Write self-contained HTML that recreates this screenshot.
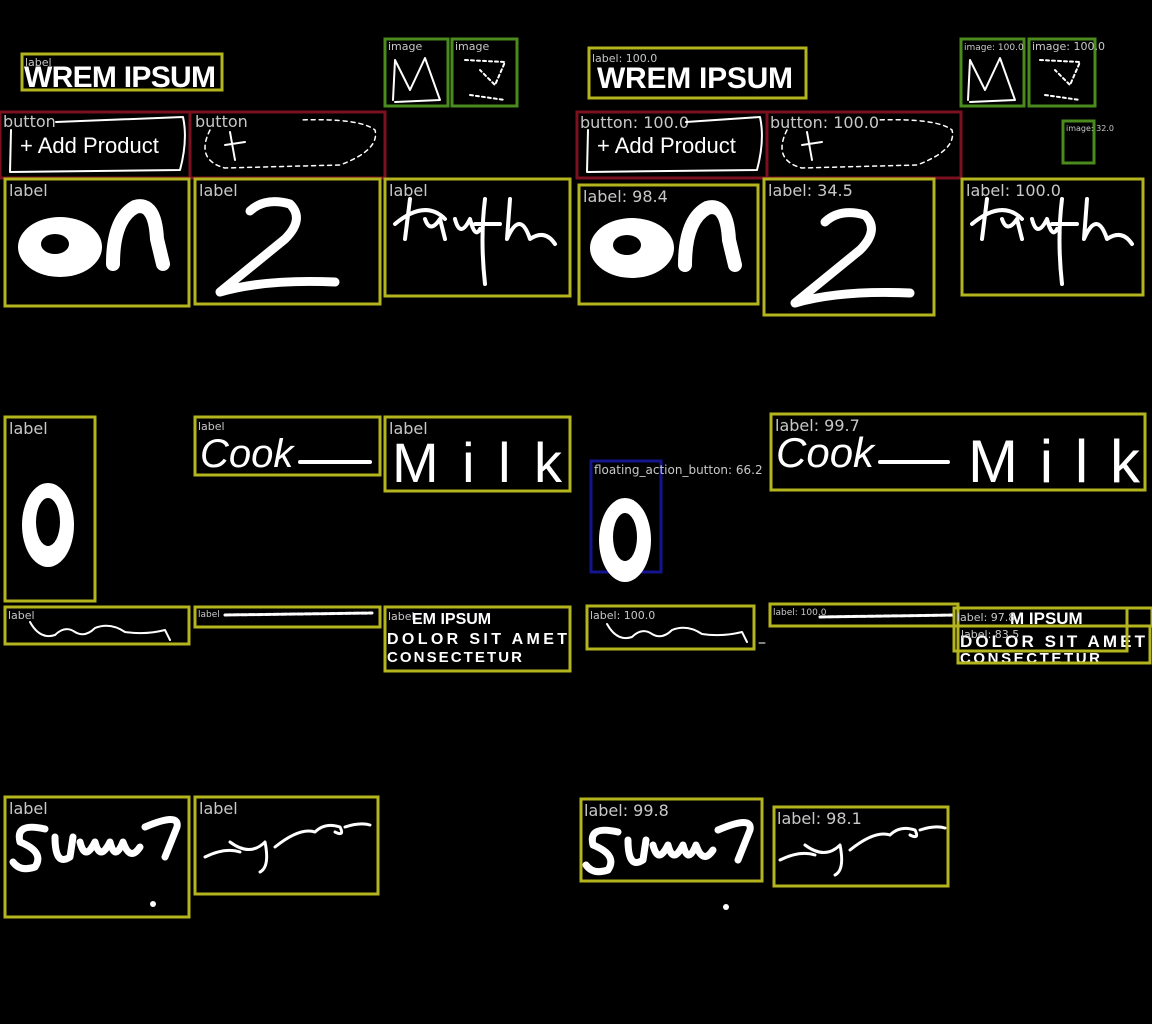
<!DOCTYPE html>
<html><head><meta charset="utf-8"><style>
html,body{margin:0;padding:0;background:#000;width:1152px;height:1024px;overflow:hidden}
svg{display:block}
.y{fill:none;stroke:#b4b41e;stroke-width:3}
.r{fill:none;stroke:#7a1020;stroke-width:3}
.g{fill:none;stroke:#4a8a1e;stroke-width:3}
.b{fill:none;stroke:#14148c;stroke-width:3}
.l{fill:#c8c8c8;font-family:"DejaVu Sans","Liberation Sans",sans-serif}
.s{font-size:11px}.m{font-size:16px}.t{font-size:9px}
.w{fill:none;stroke:#fff;stroke-linecap:round;stroke-linejoin:round}
.hw{fill:#fff;font-family:"Liberation Sans",sans-serif;font-weight:bold}
.hn{fill:#fff;font-family:"Liberation Sans",sans-serif}
</style></head><body>
<svg width="1152" height="1024" viewBox="0 0 1152 1024">
<defs>
<g id="on"><ellipse cx="55" cy="68" rx="42" ry="30" fill="#fff"/><ellipse cx="50" cy="65" rx="14" ry="10" fill="#000"/><path class="w" stroke-width="14" d="M108 85 Q108 40 130 28 Q150 22 152 60 L158 85"/></g>
<g id="two"><path class="w" stroke-width="9" d="M55 32 Q70 18 95 25 Q110 40 90 60 L25 113 Q70 100 140 103"/></g>
<g id="zero"><ellipse cx="35" cy="65" rx="26" ry="42" fill="#fff"/><ellipse cx="35" cy="62" rx="12" ry="24" fill="#000"/></g>
<g id="thk"><path class="w" stroke-width="4" d="M10 45 Q40 20 60 40 M25 20 L20 60 M40 40 Q45 55 55 40 L60 60 M70 40 Q75 60 85 40 Q90 60 95 50 M100 20 Q95 60 100 105 M90 45 L115 45 M125 20 L122 60 Q135 30 145 60 Q160 50 170 65"/></g>
<g id="sum"><path class="w" stroke-width="7" d="M40 32 Q10 25 15 45 Q40 55 30 70 Q15 75 8 65 M50 40 Q50 70 65 60 L68 40 M75 45 Q80 65 90 45 Q95 65 105 45 Q110 65 118 45 Q125 65 135 50 M140 30 Q175 15 172 30 L160 60"/><circle cx="148" cy="107" r="3" fill="#fff"/></g>
<g id="sig"><path class="w" stroke-width="3" d="M10 60 Q30 50 45 55 M35 45 Q55 60 70 45 Q75 70 65 75 M80 50 Q105 30 120 35 M120 35 Q130 25 145 30 Q150 40 140 35 M150 30 Q165 25 175 28"/></g>
<g id="wav"><path class="w" stroke-width="2" d="M20 12 Q30 30 45 25 Q55 15 65 22 Q75 28 85 18 Q100 12 115 22 Q135 25 155 20 L160 30"/></g>
</defs>

<!-- LEFT -->
<rect class="y" x="22" y="54" width="200" height="36"/>
<text class="hw" x="24" y="87" font-size="30" textLength="192">WREM IPSUM</text>
<text class="l s" x="25" y="66">label</text>

<rect class="g" x="385" y="39" width="63" height="67"/>
<text class="l s" x="388" y="50">image</text>
<path class="w" stroke-width="2" d="M393 100 L395 60 L410 90 L425 58 L440 100 L395 102"/>
<rect class="g" x="452" y="39" width="65" height="67"/>
<text class="l s" x="455" y="50">image</text>
<path class="w" stroke-width="2" stroke-dasharray="3 3" d="M465 60 L505 62 L495 85 L480 70 M470 95 L505 100"/>

<rect class="r" x="0" y="112" width="190" height="66"/>
<text class="l m" x="3" y="127">button</text>
<path class="w" stroke-width="2" d="M56 122 L183 117 Q188 140 180 170 L10 172 L11 130"/>
<text class="hn" x="20" y="153" font-size="22">+ Add Product</text>
<rect class="r" x="190" y="112" width="195" height="66"/>
<text class="l m" x="195" y="127">button</text>
<path class="w" stroke-width="1.5" stroke-dasharray="4 4" d="M210 130 Q195 160 225 168 L340 165 Q380 150 375 130 Q360 118 300 120"/>
<path class="w" stroke-width="2" d="M230 132 L235 160 M225 145 L245 142"/>

<rect class="y" x="5" y="179" width="184" height="127"/>
<text class="l m" x="9" y="196">label</text>
<use href="#on" x="5" y="179"/>
<rect class="y" x="195" y="179" width="185" height="125"/>
<text class="l m" x="199" y="196">label</text>
<use href="#two" x="195" y="179"/>
<rect class="y" x="385" y="179" width="185" height="117"/>
<text class="l m" x="389" y="196">label</text>
<use href="#thk" x="385" y="179"/>

<rect class="y" x="5" y="417" width="90" height="184"/>
<text class="l m" x="9" y="434">label</text>
<use href="#zero" x="13" y="460"/>
<rect class="y" x="195" y="417" width="185" height="58"/>
<text class="l s" x="198" y="430">label</text>
<text class="hn" x="200" y="467" font-size="40" font-style="italic">Cook</text>
<path class="w" stroke-width="4" d="M300 462 L370 462"/>
<rect class="y" x="385" y="417" width="185" height="74"/>
<text class="l m" x="389" y="434">label</text>
<text class="hn" x="392" y="482" font-size="56" textLength="170">Milk</text>

<rect class="y" x="5" y="607" width="184" height="37"/>
<text class="l s" x="8" y="619">label</text>
<use href="#wav" x="10" y="610"/>
<rect class="y" x="195" y="607" width="185" height="20"/>
<text class="t l" x="198" y="617">label</text>
<path class="w" stroke-width="3" stroke-dasharray="6 2" d="M225 615 L372 613"/>
<rect class="y" x="385" y="607" width="185" height="64"/>
<text class="l s" x="388" y="620">label</text>
<text class="hw" x="412" y="624" font-size="16">EM IPSUM</text>
<text class="hw" x="387" y="644" font-size="16" textLength="180">DOLOR SIT AMET</text>
<text class="hw" x="387" y="662" font-size="15" textLength="135">CONSECTETUR</text>

<rect class="y" x="5" y="797" width="184" height="120"/>
<text class="l m" x="9" y="814">label</text>
<use href="#sum" x="5" y="797"/>
<rect class="y" x="195" y="797" width="183" height="97"/>
<text class="l m" x="199" y="814">label</text>
<use href="#sig" x="195" y="797"/>

<!-- RIGHT -->
<rect class="y" x="589" y="48" width="217" height="50"/>
<text class="hw" x="597" y="88" font-size="30" textLength="196">WREM IPSUM</text>
<text class="l s" x="592" y="62">label: 100.0</text>

<rect class="g" x="961" y="39" width="63" height="67"/>
<text class="l t" x="964" y="50">image: 100.0</text>
<path class="w" stroke-width="2" d="M968 100 L970 60 L985 90 L1000 58 L1015 100 L970 102"/>
<rect class="g" x="1029" y="39" width="66" height="67"/>
<text class="l s" x="1032" y="50">image: 100.0</text>
<path class="w" stroke-width="2" stroke-dasharray="3 3" d="M1040 60 L1080 62 L1070 85 L1055 70 M1045 95 L1080 100"/>
<rect class="g" x="1063" y="121" width="31" height="42"/>
<text class="l" font-size="8" x="1066" y="131">image: 32.0</text>

<rect class="r" x="577" y="112" width="190" height="66"/>
<text class="l m" x="580" y="128">button: 100.0</text>
<path class="w" stroke-width="2" d="M686 122 L760 117 Q765 140 757 170 L587 172 L588 130"/>
<text class="hn" x="597" y="153" font-size="22">+ Add Product</text>
<rect class="r" x="767" y="112" width="194" height="66"/>
<text class="l m" x="770" y="128">button: 100.0</text>
<path class="w" stroke-width="1.5" stroke-dasharray="4 4" d="M787 130 Q772 160 802 168 L917 165 Q957 150 952 130 Q937 118 877 120"/>
<path class="w" stroke-width="2" d="M807 132 L812 160 M802 145 L822 142"/>

<rect class="y" x="579" y="185" width="179" height="119"/>
<text class="l m" x="583" y="202">label: 98.4</text>
<use href="#on" x="577" y="180"/>
<rect class="y" x="764" y="179" width="170" height="136"/>
<text class="l m" x="768" y="196">label: 34.5</text>
<use href="#two" x="770" y="190"/>
<rect class="y" x="962" y="179" width="181" height="116"/>
<text class="l m" x="966" y="196">label: 100.0</text>
<use href="#thk" x="962" y="179"/>

<rect class="y" x="771" y="414" width="374" height="76"/>
<text class="l m" x="775" y="431">label: 99.7</text>
<text class="hn" x="776" y="467" font-size="42" font-style="italic">Cook</text>
<path class="w" stroke-width="4" d="M880 462 L948 462"/>
<text class="hn" x="968" y="482" font-size="60" textLength="172">Milk</text>

<rect class="b" x="591" y="461" width="70" height="111"/>
<use href="#zero" x="590" y="475"/>
<text class="l" font-size="12" x="594" y="474">floating_action_button: 66.2</text>

<rect class="y" x="587" y="606" width="167" height="43"/>
<text class="l s" x="590" y="619">label: 100.0</text>
<use href="#wav" x="587" y="612"/>
<path class="w" stroke-width="1" d="M759 643 L765 643"/>
<rect class="y" x="770" y="604" width="188" height="22"/>
<text class="t l" x="773" y="615">label: 100.0</text>
<path class="w" stroke-width="3" stroke-dasharray="6 2" d="M820 617 L955 615"/>
<text class="hw" x="1010" y="624" font-size="17">M IPSUM</text>
<text class="hw" x="960" y="647" font-size="17" textLength="185">DOLOR SIT AMET</text>
<text class="hw" x="960" y="663" font-size="15" textLength="140">CONSECTETUR</text>
<rect class="y" x="954" y="608" width="173" height="43"/>
<rect class="y" x="958" y="626" width="192" height="37"/>
<rect class="y" x="1127" y="608" width="25" height="18"/>
<text class="l s" x="957" y="621">label: 97.8</text>
<text class="l s" x="961" y="638">label: 83.5</text>

<rect class="y" x="581" y="799" width="181" height="82"/>
<text class="l m" x="584" y="816">label: 99.8</text>
<use href="#sum" x="578" y="800"/>
<rect class="y" x="774" y="807" width="174" height="79"/>
<text class="l m" x="777" y="824">label: 98.1</text>
<use href="#sig" x="770" y="800"/>
</svg>
</body></html>
